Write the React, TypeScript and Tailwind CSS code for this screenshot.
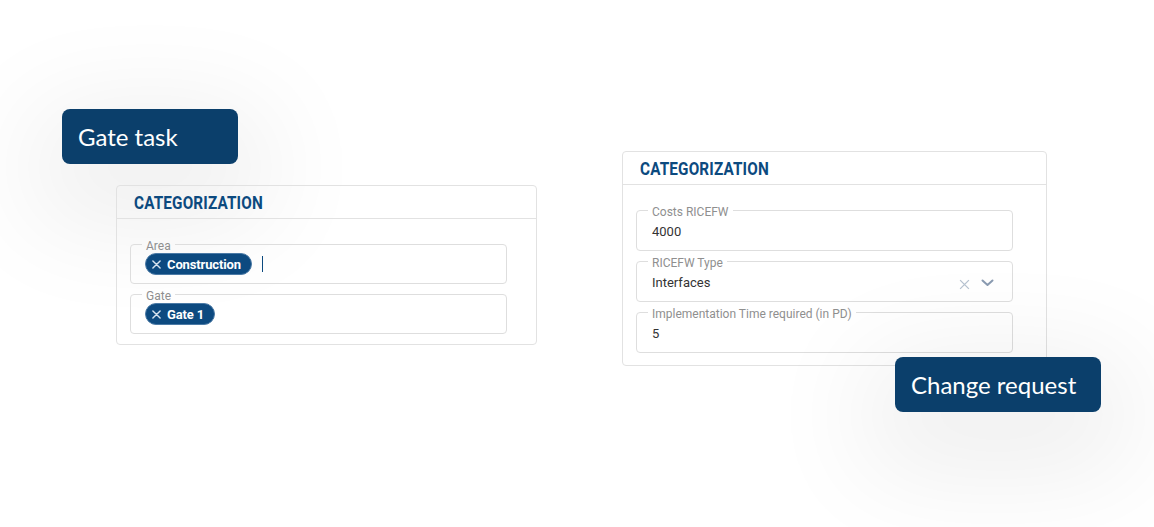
import React from "react";

const Title = () => (
  <div className="h-[33px] border-b border-[#e2e2e2] flex items-center pl-[17px] pt-[2px]">
    <span className="inline-block origin-left scale-x-[0.85] text-[18px] font-bold text-[#0c4a7f] tracking-[0.01em] leading-none" style={{ fontFamily: "Roboto, sans-serif" }}>
      CATEGORIZATION
    </span>
  </div>
);

const Field = ({ label, children }: { label: string; children: React.ReactNode }) => (
  <fieldset className="w-[377px] border border-[#dedede] rounded-[4px] pl-[11px] pr-[12px] pb-[8px] m-0 min-w-0">
    <legend className="px-1 text-[12px] leading-[12px] text-[#8f8f8f]" style={{ fontFamily: "Roboto, sans-serif" }}>
      <span className="relative top-[2px]">{label}</span>
    </legend>
    {children}
  </fieldset>
);

const Chip = ({ text }: { text: string }) => (
  <span className="inline-flex items-center h-[22px] rounded-full bg-[#0d4a80] border border-[#4b7aa6] pl-[6px] pr-[10px] gap-[6px] text-white">
    <svg width="9" height="9" viewBox="0 0 10 10" className="shrink-0">
      <path d="M1 1L9 9M9 1L1 9" stroke="#d6e2ee" strokeWidth="1.6" strokeLinecap="round" />
    </svg>
    <span className="inline-block text-[13px] font-bold leading-none tracking-[-0.01em]" style={{ fontFamily: "Roboto, sans-serif" }}>{text}</span>
  </span>
);

const Value = ({ children }: { children: React.ReactNode }) => (
  <div className="h-[20px] mt-[6px] pl-1 flex items-center text-[13px] text-[#333] leading-[20px]" style={{ fontFamily: "Roboto, sans-serif" }}>
    {children}
  </div>
);

const Badge = ({ text, w }: { text: string; w: string }) => (
  <div className={`h-[55px] ${w} rounded-[8px] bg-[#0b3f6b] flex items-center pl-4 text-white text-[24px] shadow-[0_30px_110px_30px_rgba(0,0,0,0.07)]`} style={{ fontFamily: "Lato, sans-serif" }}>
    {text}
  </div>
);

export default function App() {
  return (
    <div className="w-[1154px] h-[527px] bg-white overflow-hidden flex items-start pt-[109px] pl-[62px]">
      <div className="flex flex-col">
        <Badge text="Gate task" w="w-[176px]" />
        <div className="ml-[54px] mt-[21px] w-[421px] h-[160px] border border-[#e2e2e2] rounded-[4px]">
          <Title />
          <div className="pl-[13px] pt-[19px] flex flex-col gap-[4px]">
            <Field label="Area">
              <div className="mt-[3px] pl-[3px] flex items-center">
                <Chip text="Construction" />
                <span className="ml-[10px] w-[1.5px] h-[16px] bg-[#0c4a7f]" />
              </div>
            </Field>
            <Field label="Gate">
              <div className="mt-[3px] pl-[3px] flex items-center">
                <Chip text="Gate 1" />
              </div>
            </Field>
          </div>
        </div>
      </div>
      <div className="ml-[85px] mt-[42px] flex flex-col">
        <div className="w-[425px] h-[215px] border border-[#e2e2e2] rounded-[4px]">
          <Title />
          <div className="pl-[13px] pt-[19px] flex flex-col gap-[4px]">
            <Field label="Costs RICEFW">
              <Value>4000</Value>
            </Field>
            <Field label="RICEFW Type">
              <Value>
                <span className="flex-1">Interfaces</span>
                <svg width="11" height="11" viewBox="0 0 10 10" className="mr-[11px] mt-[3px]">
                  <path d="M1 1L9 9M9 1L1 9" stroke="#b7c3d1" strokeWidth="1.2" />
                </svg>
                <svg width="13" height="8" viewBox="0 0 13 8" className="mr-[6px]">
                  <path d="M1.5 1.5L6.5 6L11.5 1.5" stroke="#8a9bb1" strokeWidth="2" fill="none" strokeLinecap="round" strokeLinejoin="round" />
                </svg>
              </Value>
            </Field>
            <Field label="Implementation Time required (in PD)">
              <Value>5</Value>
            </Field>
          </div>
        </div>
        <div className="ml-[273px] -mt-[9px] relative z-10">
          <Badge text="Change request" w="w-[206px]" />
        </div>
      </div>
    </div>
  );
}
